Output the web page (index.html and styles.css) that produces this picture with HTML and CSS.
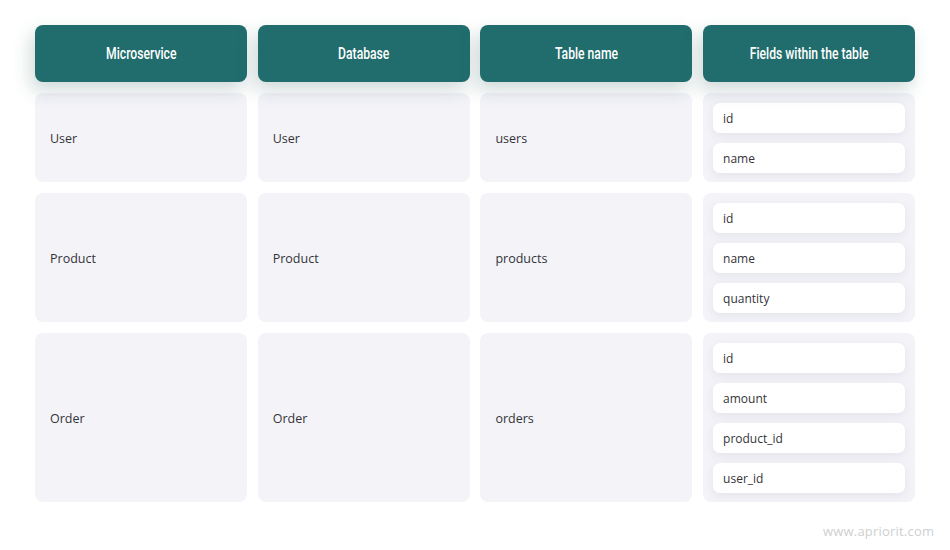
FILE: index.html
```html
<!DOCTYPE html>
<html>
<head>
<meta charset="utf-8">
<link rel="stylesheet" href="styles.css">
</head>
<body>
<div class="page">
  <div class="grid">
    <div class="head"><span class="head-text">Microservice</span></div>
    <div class="head"><span class="head-text">Database</span></div>
    <div class="head"><span class="head-text">Table name</span></div>
    <div class="head"><span class="head-text">Fields within the table</span></div>

    <div class="cell">User</div>
    <div class="cell">User</div>
    <div class="cell">users</div>
    <div class="fields">
      <div class="field">id</div>
      <div class="field">name</div>
    </div>

    <div class="cell">Product</div>
    <div class="cell">Product</div>
    <div class="cell">products</div>
    <div class="fields">
      <div class="field">id</div>
      <div class="field">name</div>
      <div class="field">quantity</div>
    </div>

    <div class="cell">Order</div>
    <div class="cell">Order</div>
    <div class="cell">orders</div>
    <div class="fields">
      <div class="field">id</div>
      <div class="field">amount</div>
      <div class="field">product_id</div>
      <div class="field">user_id</div>
    </div>
  </div>
  <div class="footer">www.apriorit.com</div>
</div>
</body>
</html>
```
FILE: styles.css
```css
html, body {
  margin: 0;
  padding: 0;
  background: #ffffff;
}
.page {
  width: 950px;
  height: 550px;
  box-sizing: border-box;
  padding: 25px 35px 0 35px;
  font-family: "Open Sans", "Noto Sans", sans-serif;
}
.grid {
  display: grid;
  grid-template-columns: 212px 212px 212px 212px;
  column-gap: 10.7px;
  row-gap: 11px;
  grid-template-rows: 57px auto auto auto;
}
.head {
  background: #216d6d;
  color: #ffffff;
  border-radius: 8px;
  display: flex;
  align-items: center;
  justify-content: center;
  box-shadow: -4px 8px 18px rgba(40, 80, 80, 0.22);
  position: relative;
  z-index: 1;
}
.head-text {
  display: inline-block;
  font-family: Roboto, "DejaVu Sans", sans-serif;
  font-weight: 500;
  font-size: 16px;
  white-space: nowrap;
  transform: scaleX(0.76);
}
.cell {
  background: #f3f3f8;
  border-radius: 8px;
  display: flex;
  align-items: center;
  padding-left: 15px;
  padding-top: 1px;
  font-size: 12.5px;
  color: #333438;
}
.fields {
  background: #f3f3f8;
  border-radius: 8px;
  padding: 10px 10px 9px 10px;
  display: flex;
  flex-direction: column;
  gap: 10px;
}
.field {
  background: #ffffff;
  height: 30px;
  border-radius: 7px;
  display: flex;
  align-items: center;
  padding-left: 10px;
  font-size: 12px;
  color: #333438;
  box-shadow: 0 3px 8px rgba(200, 200, 215, 0.35);
}
.footer {
  position: absolute;
  left: 823px;
  top: 522px;
  font-size: 13px;
  color: #cfcfcf;
  letter-spacing: 0.2px;
}
```
